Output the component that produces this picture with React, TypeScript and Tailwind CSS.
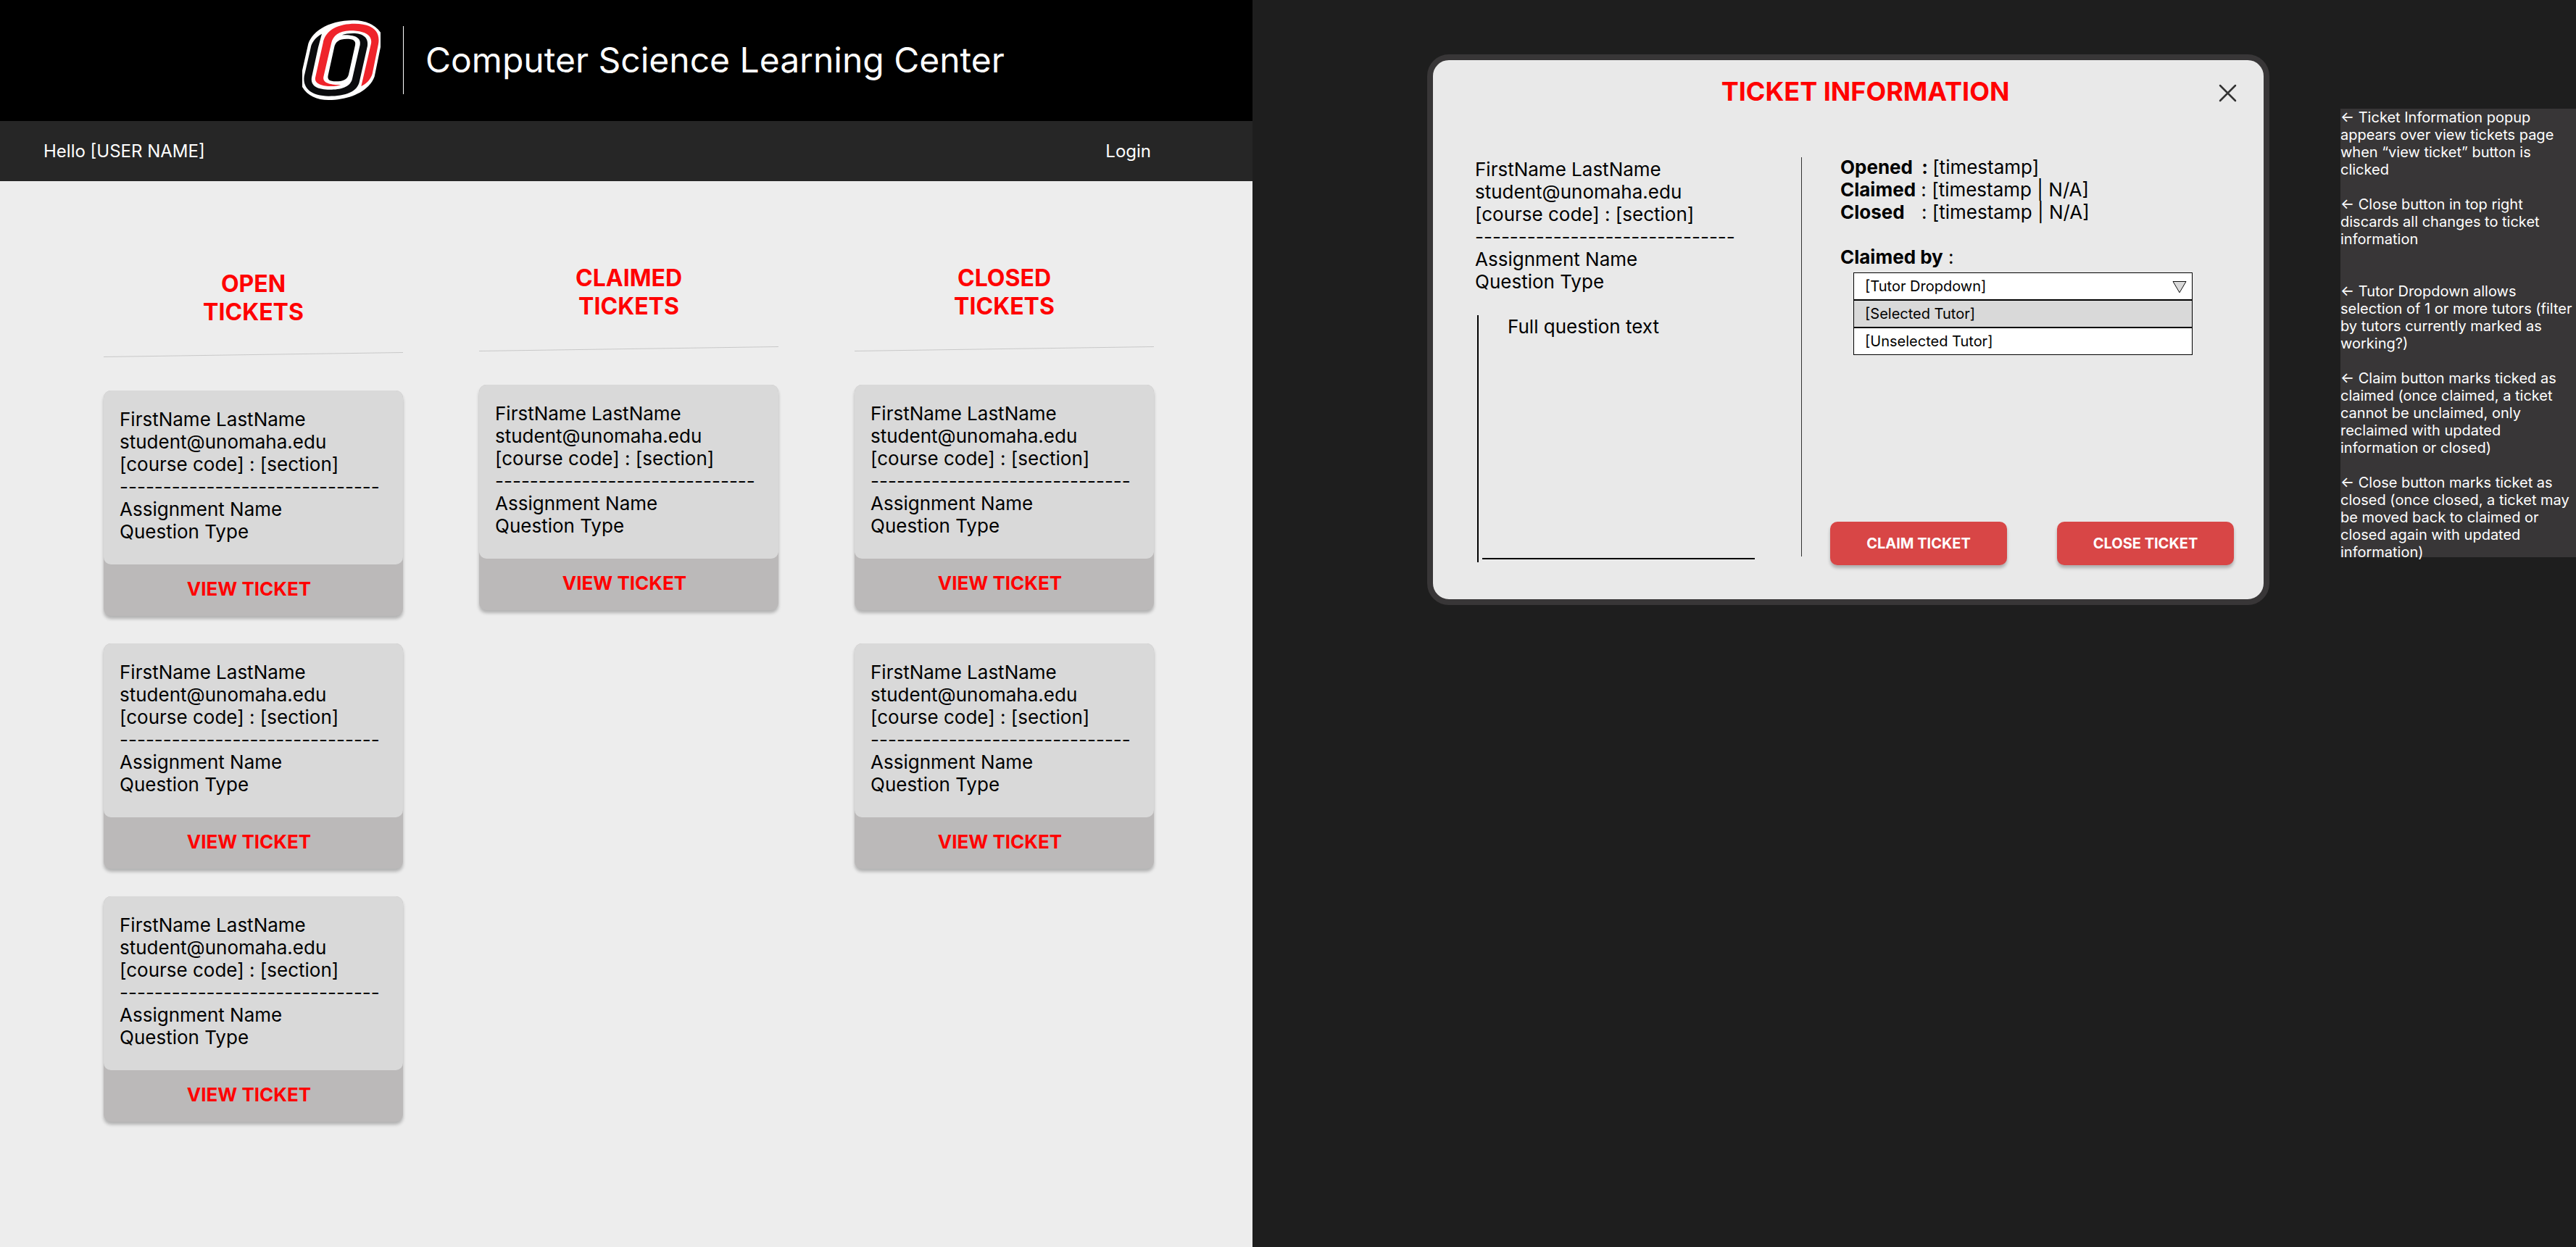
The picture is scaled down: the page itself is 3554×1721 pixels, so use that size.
import React from "react";

const DASHES = "------------------------------";

type Column = { status: string; tickets: number; gap: string };

const COLUMNS: Column[] = [
  { status: "OPEN", tickets: 3, gap: "gap-[38px]" },
  { status: "CLAIMED", tickets: 1, gap: "gap-[38px]" },
  { status: "CLOSED", tickets: 2, gap: "gap-[46px]" },
];

function Logo() {
  return (
    <svg viewBox="51 51 327 336" className="h-28 w-[109px] shrink-0" role="img" aria-label="University logo">
      <path
        fill="#fff"
        d="M51 262 L74 160 C84 108 150 54 265 54 C312 54 352 72 375 104 L375 165 L350 287 C330 345 250 384 160 384 C112 384 72 366 51 330 Z"
      />
      <path
        fill="#0a0b0d"
        d="M132 110 C104 126 90 146 86 168 L59 286 C52 338 92 368 160 368 C232 368 280 350 288 306 L321 160 C326 124 300 108 262 108 C244 108 228 110 215 115 C262 114 296 122 290 156 L258 296 C250 332 208 341 165 341 C118 341 84 328 90 290 L117 166 Z"
      />
      <path
        fill="#ef242b"
        d="M295 327 L336 150 C342 112 304 97 248 97 C202 98 178 118 171 150 L139 288 C134 314 168 321 211 321 C186 332 98 332 105 292 L137 148 C146 92 204 68 268 68 C336 68 376 96 366 152 L341 276 C334 300 316 316 295 327 Z"
      />
      <path
        fill="#000"
        d="M235 131 C262 131 274 138 270 157 L243 278 C238 300 218 307 190 307 C164 307 154 300 158 282 L183 168 C188 142 204 131 235 131 Z"
      />
    </svg>
  );
}

function TicketSummary() {
  return (
    <div className="text-[26px] leading-[31px] whitespace-nowrap text-black">
      <p>FirstName LastName</p>
      <p>student@unomaha.edu</p>
      <p>[course code] : [section]</p>
      <p>{DASHES}</p>
      <p>Assignment Name</p>
      <p>Question Type</p>
    </div>
  );
}

function TicketCard() {
  return (
    <article className="rounded-[10px] bg-[#bbb9b9] shadow-[0_4px_4px_rgba(0,0,0,0.25)]">
      <div className="rounded-[10px] bg-[#d9d9d9] pt-6 pr-4 pb-[30px] pl-[22px]">
        <TicketSummary />
      </div>
      <button
        type="button"
        className="block h-[71px] w-full cursor-pointer pr-3 pb-1 text-center text-[26px] leading-[31px] font-bold text-[#ff0000]"
      >
        VIEW TICKET
      </button>
    </article>
  );
}

function TicketColumn({ status, tickets, gap }: Column) {
  return (
    <section className="flex flex-col first:mt-2">
      <h2 className="text-center text-[32px] leading-[39px] font-bold text-[#ff0000]">
        {status}
        <br />
        TICKETS
      </h2>
      <svg viewBox="0 0 413 7" preserveAspectRatio="none" className="mt-9 h-[7px] w-full" aria-hidden="true">
        <line x1="0" y1="6.5" x2="413" y2="0.5" stroke="#c8c8c8" strokeWidth="1" />
      </svg>
      <div className={`mt-[46px] flex flex-col ${gap}`}>
        {Array.from({ length: tickets }, (_, i) => (
          <TicketCard key={i} />
        ))}
      </div>
    </section>
  );
}

function TicketsPage() {
  return (
    <main className="flex flex-col bg-[#ededed]">
      <header className="flex h-[167px] items-center bg-black pb-0.5 pl-[417px] text-white">
        <Logo />
        <div className="ml-[30px] h-[94px] w-px bg-white" />
        <h1 className="ml-[30px] text-5xl leading-[58px] whitespace-nowrap">Computer Science Learning Center</h1>
      </header>
      <nav className="flex h-[83px] items-center justify-between bg-[#262626] pr-[140px] pl-[60px] text-2xl leading-[29px] text-white">
        <span>Hello [USER NAME]</span>
        <a href="#login">Login</a>
      </nav>
      <div className="grid grid-cols-3 items-start gap-[105px] pt-[114px] pr-[136px] pb-[114px] pl-[143px]">
        {COLUMNS.map((c) => (
          <TicketColumn key={c.status} {...c} />
        ))}
      </div>
    </main>
  );
}

function TutorPicker() {
  return (
    <div className="mt-[6px] mr-[57px] ml-8 text-xl text-black">
      <div className="relative">
        <select
          id="tutor"
          className="block h-[38px] w-full appearance-none border border-black bg-white pl-[15px] leading-6"
          defaultValue="none"
        >
          <option value="none">[Tutor Dropdown]</option>
        </select>
        <svg viewBox="0 0 20 17" className="pointer-events-none absolute top-3 right-2 h-[17px] w-5" aria-hidden="true">
          <path d="M1 0.5 H19 L10 15.8 Z" fill="#d9d9d9" stroke="#111" strokeWidth="1" />
        </svg>
      </div>
      <ul role="listbox" aria-label="Tutors">
        <li role="option" aria-selected="true" className="h-[38px] border border-black bg-[#d9d9d9] pl-[15px] leading-9">
          [Selected Tutor]
        </li>
        <li role="option" aria-selected="false" className="h-[38px] border border-black bg-white pl-[15px] leading-9">
          [Unselected Tutor]
        </li>
      </ul>
    </div>
  );
}

function ActionButton({ children }: { children: React.ReactNode }) {
  return (
    <button
      type="button"
      className="h-[60px] w-[244px] cursor-pointer rounded-[10px] bg-[#d84646] text-xl font-bold text-white shadow-[0_4px_4px_rgba(0,0,0,0.25)]"
    >
      {children}
    </button>
  );
}

function TicketDialog() {
  return (
    <section
      role="dialog"
      aria-labelledby="ticket-title"
      className="min-w-0 flex-1 rounded-[30px] border-8 border-[#383637] bg-[#e9e9e9] pb-[47px]"
    >
      <div className="flex items-center pt-[21px] pr-9 pl-[110px]">
        <h2 id="ticket-title" className="flex-1 text-center text-4xl leading-[44px] font-bold text-[#ff0000]">
          TICKET INFORMATION
        </h2>
        <button type="button" aria-label="Close" className="cursor-pointer pt-1">
          <svg viewBox="0 0 27 27" className="size-[27px]" fill="none" stroke="#333" strokeWidth="2.5" strokeLinecap="round">
            <path d="M3 3 L24 24 M24 3 L3 24" />
          </svg>
        </button>
      </div>
      <div className="mt-[67px] grid grid-cols-[386fr_auto_557fr] pr-[41px] pl-[58px]">
        <div className="pt-[3px] pb-1">
          <TicketSummary />
          <div className="mt-[31px] ml-[3px] flex h-[341px] border-l-2 border-black">
            <div className="mb-1 ml-[5px] flex-1 border-b-2 border-black pl-[35px] text-[26px] leading-[31px] text-black">
              Full question text
            </div>
          </div>
        </div>
        <div className="mt-[2px] mr-[39px] mb-3 ml-16 w-px bg-[#333]" />
        <div className="flex flex-col">
          <div className="pl-[14px] text-[26px] leading-[31px] whitespace-pre text-black">
            <p>
              <b>{"Opened  : "}</b>[timestamp]
            </p>
            <p>
              <b>Claimed</b>
              {" : [timestamp | N/A]"}
            </p>
            <p>
              <b className="pr-4">Closed</b>
              {" : [timestamp | N/A]"}
            </p>
            <label htmlFor="tutor" className="mt-[31px] block">
              <b>Claimed by</b>
              {" :"}
            </label>
          </div>
          <TutorPicker />
          <div className="mt-auto flex justify-between">
            <ActionButton>CLAIM TICKET</ActionButton>
            <ActionButton>CLOSE TICKET</ActionButton>
          </div>
        </div>
      </div>
    </section>
  );
}

function Notes() {
  return (
    <aside className="mt-[75px] h-[619px] w-[325px] shrink-0 bg-[#383637] text-xl leading-6 text-white">
      <p>← Ticket Information popup appears over view tickets page when “view ticket” button is clicked</p>
      <p className="mt-6">← Close button in top right discards all changes to ticket information</p>
      <p className="mt-12">
        ← Tutor Dropdown allows selection of 1 or more tutors (filter by tutors currently marked as working?)
      </p>
      <p className="mt-6">
        ← Claim button marks ticked as claimed (once claimed, a ticket cannot be unclaimed, only reclaimed with updated
        information or closed)
      </p>
      <p className="mt-6">
        ← Close button marks ticket as closed (once closed, a ticket may be moved back to claimed or closed again with
        updated information)
      </p>
    </aside>
  );
}

export default function App() {
  return (
    <div className="grid min-h-screen grid-cols-[1728fr_1826fr] bg-[#1e1e1e] font-['Inter',sans-serif]">
      <TicketsPage />
      <div className="flex items-start gap-[98px] pt-[75px] pl-[241px]">
        <TicketDialog />
        <Notes />
      </div>
    </div>
  );
}
